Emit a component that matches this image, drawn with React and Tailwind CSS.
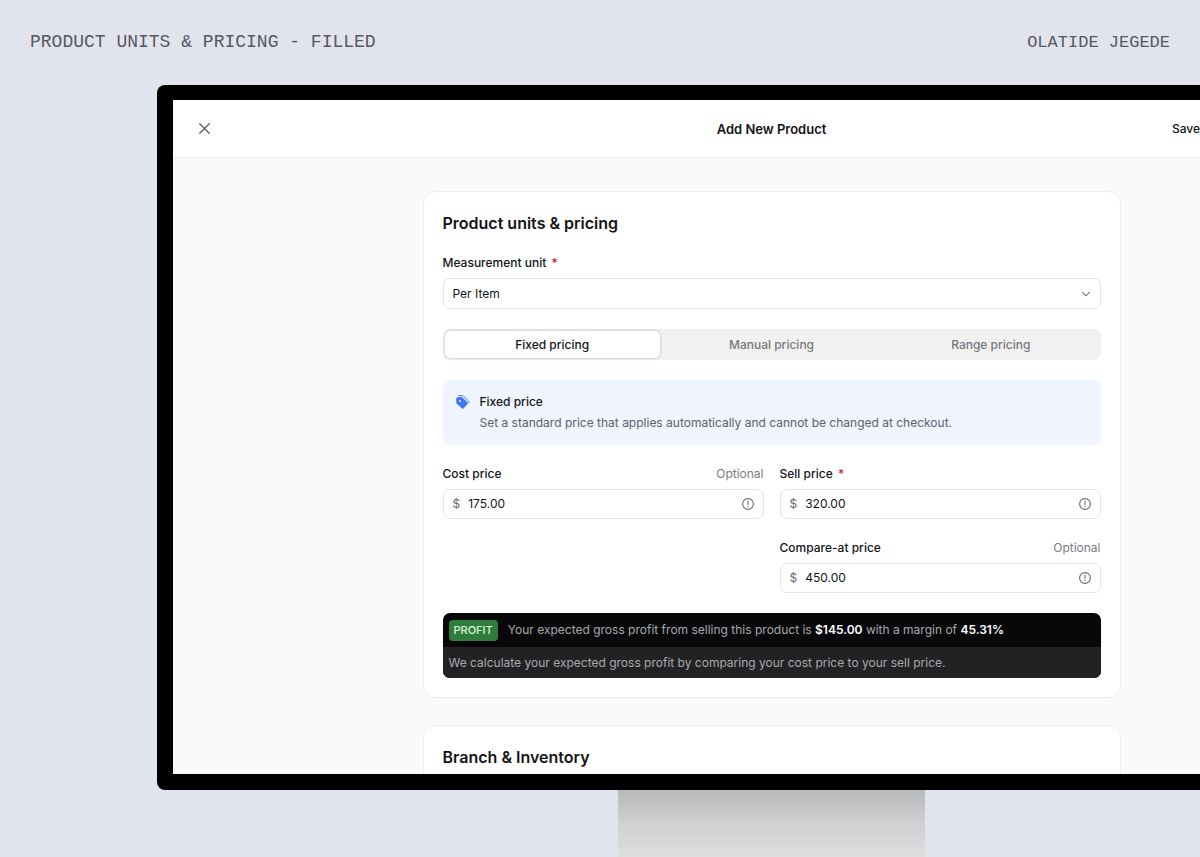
import React, { useState } from 'react';
import { ChevronDown, X } from 'lucide-react';

const TABS = ['Fixed pricing', 'Manual pricing', 'Range pricing'];

const TagsIcon = () => (
  <svg width="14" height="14" viewBox="0 0 14 14" className="mt-[3px] shrink-0" aria-hidden="true">
    <path
      fill="#3f78f0"
      fillRule="evenodd"
      d="M0.2 4C0.2 3 0.8 2.3 1.8 2.2L5 1.9c0.5 0 1 0.1 1.4 0.5l4.9 4.6c0.7 0.7 0.7 1.6 0 2.3l-3.3 3.8c-0.7 0.7-1.7 0.7-2.4 0L1 9.1C0.6 8.7 0.3 8.2 0.3 7.6zM4 4.9a1 1 0 1 0 0 2 1 1 0 0 0 0-2z"
    />
    <path d="M2.6 0.9L6 0.6c0.6 0 1.1 0.2 1.5 0.5l4.8 4.6c0.6 0.6 0.7 1.2 0.4 1.9" fill="none" stroke="#3f78f0" strokeWidth="1" strokeLinecap="round" />
  </svg>
);

const InfoIcon = () => (
  <svg width="14" height="14" viewBox="0 0 14 14" className="shrink-0 text-[#6b6b70]" fill="none" stroke="currentColor" strokeLinecap="round" aria-hidden="true">
    <circle cx="7" cy="7" r="5.4" strokeWidth="1.1" />
    <path d="M7 4.1v3.3" strokeWidth="1.1" />
    <circle cx="7" cy="9.5" r="0.7" fill="currentColor" stroke="none" />
  </svg>
);

const Required = () => <span className="ml-0.5 text-[#d0222b]">*</span>;

const PriceField = ({ id, label, value, required, optional }) => {
  const [price, setPrice] = useState(value);

  return (
    <div className="flex flex-col gap-1.5">
      <div className="flex justify-between leading-[18px]">
        <label htmlFor={id} className="font-medium">
          {label} {required && <Required />}
        </label>
        {optional && <span className="text-[#7c7c80]">Optional</span>}
      </div>
      <div className="flex h-[30px] items-center gap-2 rounded-[7px] border border-[#e4e4e6] bg-white pr-2 pl-[9px]">
        <span className="text-[#6b6b70]">$</span>
        <input
          id={id}
          type="text"
          value={price}
          onChange={(e) => setPrice(e.target.value)}
          className="min-w-0 flex-1 bg-transparent outline-none"
        />
        <InfoIcon />
      </div>
    </div>
  );
};

const Card = ({ title, children }) => (
  <section className="flex shrink-0 flex-col gap-5 rounded-xl border border-[#ededee] bg-white p-[19px] pt-5">
    <h2 className="text-base leading-[22px] font-semibold">{title}</h2>
    {children}
  </section>
);

const App = () => {
  const [tab, setTab] = useState(TABS[0]);

  return (
    <div className="flex h-screen flex-col overflow-hidden bg-[#e1e4ec] font-['Inter',sans-serif] text-xs text-[#141417]">
      <header className="flex h-[85px] shrink-0 items-baseline justify-between px-[30px] pt-[30px] font-['Liberation_Mono',monospace] text-lg leading-6 text-[#555866]">
        <p>PRODUCT UNITS &amp; PRICING - FILLED</p>
        <p className="text-[17px]">OLATIDE JEGEDE</p>
      </header>

      {/* Monitor, runs off the right edge */}
      <div className="-mr-[186px] ml-[157px] flex min-h-0 flex-1 flex-col">
        <div className="flex min-h-0 flex-1 flex-col rounded-lg bg-black p-4 pt-[15px]">
          <div className="flex min-h-0 flex-1 flex-col overflow-hidden bg-[#fafafa]">
            <div className="grid h-[58px] shrink-0 grid-cols-[1fr_auto_1fr] items-center border-b border-[#ededee] bg-white">
              <button type="button" aria-label="Close" className="ml-[22px] justify-self-start text-[#5c5c60]">
                <X size={19} strokeWidth={1.6} />
              </button>
              <h1 className="text-[13px] leading-5 font-semibold">Add New Product</h1>
              <button type="button" className="mr-[170px] justify-self-end leading-5 font-medium">Save</button>
            </div>

            <main className="mx-auto flex w-full max-w-[698px] flex-col gap-[27px] pt-[33px]">
              <Card title="Product units &amp; pricing">
                <div className="flex flex-col gap-1.5">
                  <label htmlFor="unit" className="leading-[18px] font-medium">
                    Measurement unit <Required />
                  </label>
                  <div className="relative">
                    <select id="unit" className="h-[31px] w-full appearance-none rounded-[7px] border border-[#e4e4e6] bg-white px-[9px]">
                      <option>Per Item</option>
                    </select>
                    <ChevronDown size={14} strokeWidth={1.8} className="pointer-events-none absolute top-[9px] right-2 text-[#5c5c60]" />
                  </div>
                </div>

                <div role="tablist" className="grid h-[31px] grid-cols-3 gap-1 rounded-[7px] bg-[#f1f1f2] p-0.5 font-medium">
                  {TABS.map((name) => (
                    <button
                      key={name}
                      type="button"
                      role="tab"
                      aria-selected={tab === name}
                      onClick={() => setTab(name)}
                      className={tab === name ? 'rounded-[5px] bg-white shadow-[0_0_3px_rgba(0,0,0,0.25)]' : 'text-[#77777c]'}
                    >
                      {name}
                    </button>
                  ))}
                </div>

                <div className="flex gap-2.5 rounded-[7px] bg-[#eff4ff] px-[13px] py-3 leading-5">
                  <TagsIcon />
                  <div className="flex flex-col gap-px">
                    <h3 className="font-medium">Fixed price</h3>
                    <p className="text-[#5d6070]">
                      Set a standard price that applies automatically and cannot be changed at checkout.
                    </p>
                  </div>
                </div>

                <div className="grid grid-cols-2 gap-x-4 gap-y-5">
                  <PriceField id="cost" label="Cost price" value="175.00" optional />
                  <PriceField id="sell" label="Sell price" value="320.00" required />
                  <div className="col-start-2">
                    <PriceField id="compare" label="Compare-at price" value="450.00" optional />
                  </div>
                </div>

                <div className="overflow-hidden rounded-[7px] bg-[#08080a] text-[#a9a9ad]">
                  <div className="flex h-[34px] items-center gap-2.5 px-1.5">
                    <span className="rounded bg-[#2f7d3b] px-[5px] text-[11px] leading-[21px] font-medium text-[#d9f5dc]">PROFIT</span>
                    <p>
                      Your expected gross profit from selling this product is{' '}
                      <strong className="font-semibold text-white">$145.00</strong> with a margin of{' '}
                      <strong className="font-semibold text-white">45.31%</strong>
                    </p>
                  </div>
                  <p className="bg-[#222225] px-1.5 leading-[31px]">
                    We calculate your expected gross profit by comparing your cost price to your sell price.
                  </p>
                </div>
              </Card>

              <Card title="Branch &amp; Inventory" />
            </main>
          </div>
        </div>
        <div className="mx-auto h-[67px] w-[307px] shrink-0 bg-linear-to-b from-[#b7b8ba] via-[#cfd0d1] to-[#dddede]" />
      </div>
    </div>
  );
};

export default App;
